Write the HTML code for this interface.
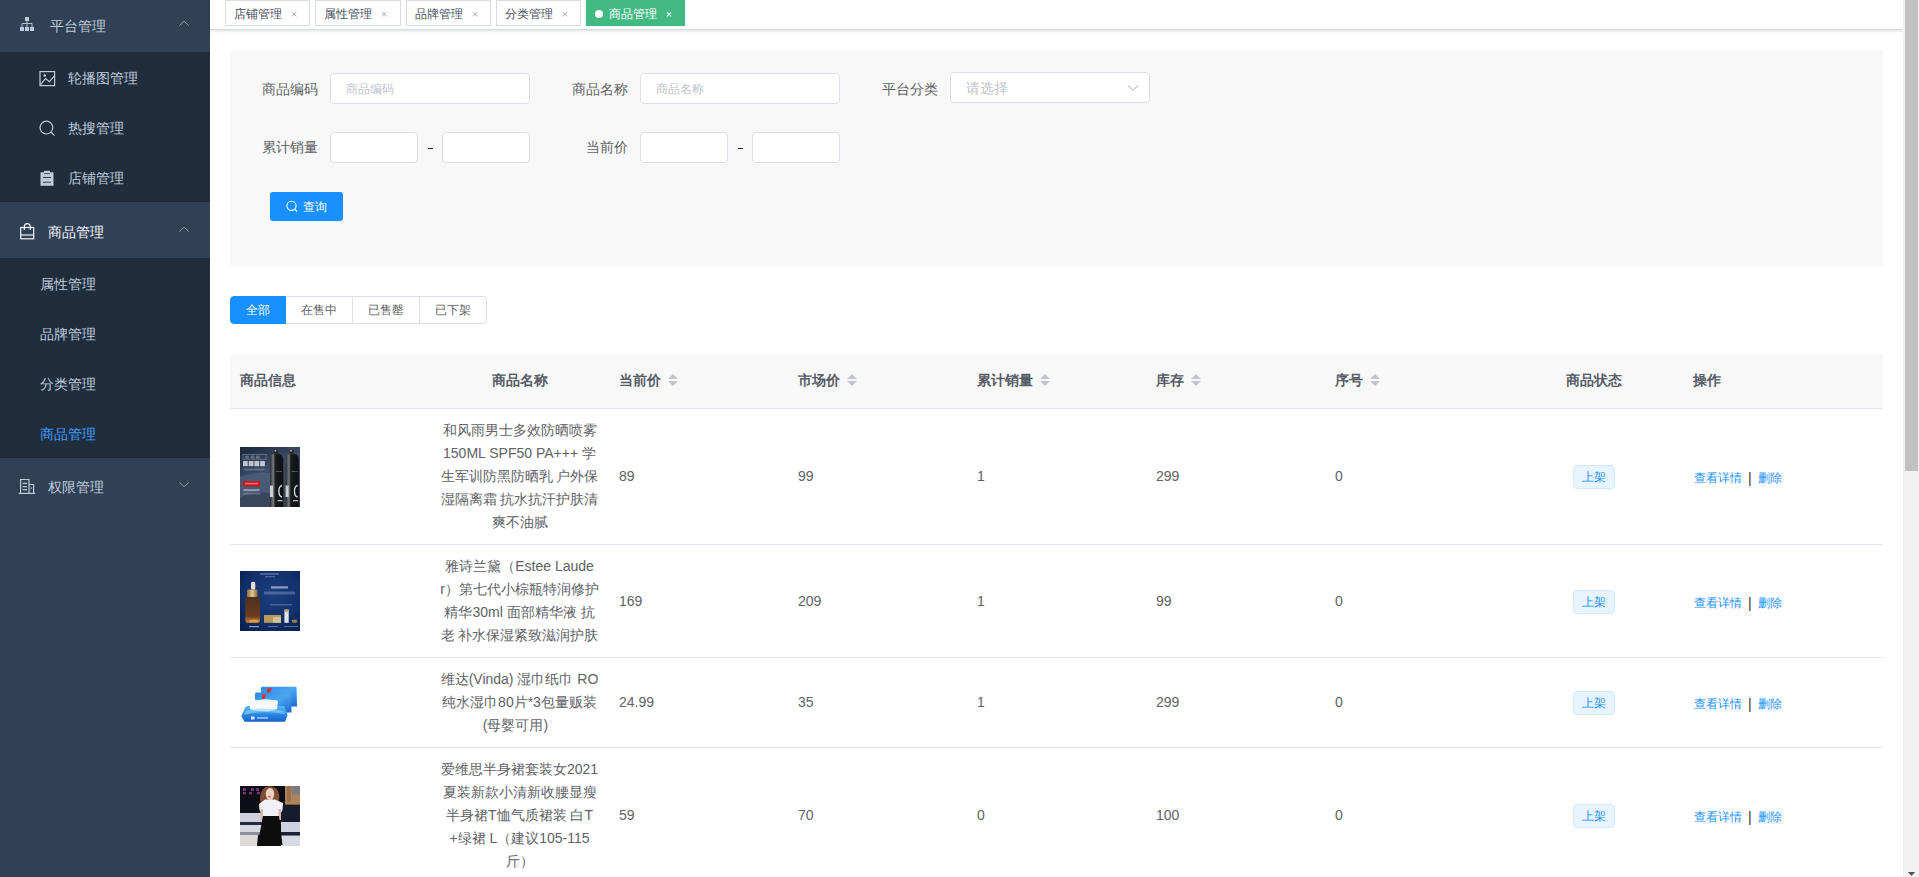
<!DOCTYPE html>
<html><head><meta charset="utf-8"><title>商品管理</title>
<style>
*{box-sizing:border-box;margin:0;padding:0}
html,body{width:1919px;height:877px;overflow:hidden;background:#fff;font-family:"Liberation Sans",sans-serif;}
.abs{position:absolute}
#side{position:absolute;left:0;top:0;width:210px;height:877px;background:#304156;color:#bfcbd9;font-size:14px}
.sub{position:absolute;left:0;width:210px;background:#1f2d3d}
.mi{position:absolute;left:0;width:210px;height:20px;line-height:20px;white-space:nowrap}
.ico{position:absolute}
#main{position:absolute;left:210px;top:0;width:1693px;height:877px;background:#fff}
#tags{position:absolute;left:0;top:0;width:1693px;height:30px;background:#fff;border-bottom:1px solid #d8dce5;box-shadow:0 1px 3px 0 rgba(0,0,0,.12),0 0 3px 0 rgba(0,0,0,.04)}
.tag{position:absolute;top:0;height:26px;line-height:24px;border:1px solid #d8dce5;color:#495060;background:#fff;font-size:12px;padding-left:8px;white-space:nowrap}
.tag .x{position:absolute;top:-1px}
.tag .tt{position:absolute;top:0;line-height:26px;height:26px}
.tag .dot{position:absolute;left:8px;top:9px;width:8px;height:8px;border-radius:50%;background:#fff}
.tag.act{background:#42b983;border-color:#42b983;color:#fff}
#sb{position:absolute;left:1903px;top:0;width:16px;height:877px;background:#f1f1f1}
#sb i{position:absolute;left:2px;top:0;width:13px;height:471px;background:#c1c1c1}

#card{position:absolute;left:20px;top:50px;width:1653px;height:216px;background:#f8f8f8}
.lbl{position:absolute;font-size:14px;color:#606266;line-height:20px;height:20px;white-space:nowrap;margin-top:1px}
.inp{position:absolute;background:#fff;border:1px solid #dcdfe6;border-radius:4px;height:31px}
.ph{position:absolute;left:15px;top:1px;line-height:29px;font-size:12px;color:#c0c4cc;white-space:nowrap}
.dash{position:absolute;width:5px;height:1px;background:#1a1a1a}
#qbtn{position:absolute;left:40px;top:142px;width:73px;height:29px;border-radius:3px;background:#1890ff;color:#fff;font-size:12px}
#radios{position:absolute;left:20px;top:296px;height:28px}
.rb{position:absolute;top:0;height:28px;border:1px solid #dcdfe6;background:#fff;color:#606266;font-size:12px;line-height:26px;text-align:center}
.rb.on{background:#1890ff;border-color:#1890ff;color:#fff}
#tbl{position:absolute;left:20px;top:354px;width:1653px;height:530px}
.th{position:absolute;left:0;top:0;width:1653px;height:55px;background:#f8f8f8;border-bottom:1px solid #dfe6ec}
.hc{position:absolute;top:-1px;height:54px;line-height:54px;font-size:14px;font-weight:bold;color:#575d68;white-space:nowrap}
.row{position:absolute;left:0;width:1653px;border-bottom:1px solid #dfe6ec}
.c{position:absolute;font-size:14px;color:#606266;line-height:23px;white-space:nowrap}
.nm{position:absolute;left:200px;width:179px;top:10px;text-align:center;font-size:14px;color:#606266;line-height:23px;white-space:nowrap}
.st{position:absolute;left:1343px;width:42px;height:24px;border:1px solid #d1e9ff;background:#e8f4ff;border-radius:4px;color:#1890ff;font-size:12px;line-height:22px;text-align:center}
.op{position:absolute;left:1464px;width:100px;height:20px;font-size:12px;color:#1890ff;line-height:20px;white-space:nowrap}
.op span,.op b{position:absolute;top:0}
.op b{font-weight:normal;color:#303133;font-size:14px}
.pic{position:absolute;left:10px;width:60px;height:60px;overflow:hidden}
.caret{position:absolute;top:20px;width:10px;height:12px}
</style></head><body>
<div id="side">
  <div class="sub" style="top:52px;height:150px"></div>
  <div class="sub" style="top:258px;height:200px"></div>
  <svg class="ico" style="left:0;top:0" width="210" height="520" viewBox="0 0 210 520">
    <g fill="#bfcbd9">
      <rect x="25" y="17" width="4" height="4"/>
      <rect x="20" y="27" width="4" height="4"/><rect x="25" y="27" width="4" height="4"/><rect x="30" y="27" width="4" height="4"/>
    </g>
    <g stroke="#bfcbd9" stroke-width="0.9" fill="none">
      <path d="M27 21V27M22 27V23.5H32V27"/>
    </g>
    <path d="M179.3 25.7L184.1 21.2L188.9 25.7" stroke="#909aa8" stroke-width="1" fill="none"/>
    <g stroke="#bfcbd9" stroke-width="1.2" fill="none">
      <rect x="40" y="71.6" width="14.6" height="14"/>
      <path d="M40.3 84.8L45.5 78.5L49.4 81.6L54.4 75.8"/>
      <circle cx="46.4" cy="127.6" r="6.4"/>
      <path d="M51 132.2L54.6 135.6"/>
    </g>
    <circle cx="44.7" cy="75.5" r="1.3" fill="#bfcbd9"/>
    <rect x="40.5" y="172.2" width="13" height="13.6" rx="0.6" fill="#bfcbd9"/>
    <rect x="44" y="170.8" width="6" height="2.6" fill="#bfcbd9"/>
    <path d="M44.2 173.6H49.8" stroke="#1f2d3d" stroke-width="0.8"/>
    <path d="M43 177.5H51M43 182.3H51" stroke="#1f2d3d" stroke-width="0.9"/>
    <g stroke="#f4f4f5" stroke-width="1.2" fill="none">
      <rect x="20.7" y="227.5" width="13" height="11.3"/>
      <path d="M20.7 235H33.7"/>
      <path d="M24.3 230V226.6A3 3 0 0 1 30.3 226.6V230"/>
    </g>
    <path d="M179.3 231.7L184.1 227.2L188.9 231.7" stroke="#909aa8" stroke-width="1" fill="none"/>
    <g stroke="#bfcbd9" stroke-width="1.2" fill="none">
      <path d="M20.6 493.3V479.5H29V493.3"/>
      <path d="M29 484.5H33.6V493.3"/>
      <path d="M18.6 493.4H35.2"/>
      <path d="M22.6 483.4H27M22.6 486.6H27M22.6 489.6H27M30.6 488.2H32"/>
    </g>
    <path d="M179.3 482.2L184.1 486.6L188.9 482.2" stroke="#909aa8" stroke-width="1" fill="none"/>
  </svg>
  <div class="mi" style="left:50px;top:16px">平台管理</div>
  <div class="mi" style="left:68px;top:68px">轮播图管理</div>
  <div class="mi" style="left:68px;top:118px">热搜管理</div>
  <div class="mi" style="left:68px;top:168px">店铺管理</div>
  <div class="mi" style="left:48px;top:222px;color:#f4f4f5">商品管理</div>
  <div class="mi" style="left:40px;top:274px">属性管理</div>
  <div class="mi" style="left:40px;top:324px">品牌管理</div>
  <div class="mi" style="left:40px;top:374px">分类管理</div>
  <div class="mi" style="left:40px;top:424px;color:#409eff">商品管理</div>
  <div class="mi" style="left:48px;top:477px">权限管理</div>
</div>
<div id="main">
  <div id="card">
    <div class="lbl" style="left:32px;top:28px">商品编码</div>
    <div class="inp" style="left:100px;top:23px;width:200px"><span class="ph">商品编码</span></div>
    <div class="lbl" style="left:342px;top:28px">商品名称</div>
    <div class="inp" style="left:410px;top:23px;width:200px"><span class="ph">商品名称</span></div>
    <div class="lbl" style="left:652px;top:28px">平台分类</div>
    <div class="inp" style="left:720px;top:22px;width:200px"><span class="ph" style="font-size:14px">请选择</span>
      <svg style="position:absolute;left:176px;top:11px" width="12" height="8"><path d="M1 1.5L6 6.3L11 1.5" stroke="#c0c4cc" stroke-width="1.1" fill="none"/></svg></div>
    <div class="lbl" style="left:32px;top:86px">累计销量</div>
    <div class="inp" style="left:100px;top:82px;width:88px"></div>
    <div class="dash" style="left:198px;top:98px"></div>
    <div class="inp" style="left:212px;top:82px;width:88px"></div>
    <div class="lbl" style="left:356px;top:86px">当前价</div>
    <div class="inp" style="left:410px;top:82px;width:88px"></div>
    <div class="dash" style="left:508px;top:98px"></div>
    <div class="inp" style="left:522px;top:82px;width:88px"></div>
    <div id="qbtn">
      <svg style="position:absolute;left:14px;top:7px" width="14" height="14"><circle cx="7.5" cy="6.8" r="4.6" stroke="#fff" stroke-width="1.1" fill="none"/><path d="M10.8 10.2L13 12.5" stroke="#fff" stroke-width="1.1"/></svg>
      <span style="position:absolute;left:33px;top:1px;line-height:29px">查询</span>
    </div>
  </div>
  <div id="radios">
    <div class="rb on" style="left:0;width:56px;border-radius:4px 0 0 4px">全部</div>
    <div class="rb" style="left:56px;width:67px;border-left:0">在售中</div>
    <div class="rb" style="left:122px;width:68px">已售罄</div>
    <div class="rb" style="left:190px;width:67px;border-left:0;border-radius:0 4px 4px 0">已下架</div>
  </div>
  <div id="tbl">
    <div class="th">
      <div class="hc" style="left:10px">商品信息</div>
      <div class="hc" style="left:200px;width:179px;text-align:center">商品名称</div>
      <div class="hc" style="left:389px">当前价</div><svg class="caret" style="left:438px" width="10" height="12" viewBox="0 0 10 12"><path d="M0 5L5 0L10 5Z M0 7L5 12L10 7Z" fill="#c0c4cc"/></svg>
<div class="hc" style="left:568px">市场价</div><svg class="caret" style="left:617px" width="10" height="12" viewBox="0 0 10 12"><path d="M0 5L5 0L10 5Z M0 7L5 12L10 7Z" fill="#c0c4cc"/></svg>
<div class="hc" style="left:747px">累计销量</div><svg class="caret" style="left:810px" width="10" height="12" viewBox="0 0 10 12"><path d="M0 5L5 0L10 5Z M0 7L5 12L10 7Z" fill="#c0c4cc"/></svg>
<div class="hc" style="left:926px">库存</div><svg class="caret" style="left:961px" width="10" height="12" viewBox="0 0 10 12"><path d="M0 5L5 0L10 5Z M0 7L5 12L10 7Z" fill="#c0c4cc"/></svg>
<div class="hc" style="left:1105px">序号</div><svg class="caret" style="left:1140px" width="10" height="12" viewBox="0 0 10 12"><path d="M0 5L5 0L10 5Z M0 7L5 12L10 7Z" fill="#c0c4cc"/></svg>

      <div class="hc" style="left:1274px;width:179px;text-align:center">商品状态</div>
      <div class="hc" style="left:1463px">操作</div>
    </div>
    <!--ROWS--><div class="row" style="top:55px;height:136px">
<div class="pic" style="top:38px"><svg width="60" height="60" viewBox="0 0 60 60"><defs><linearGradient id="g1" x1="0" y1="0" x2="0.5" y2="1"><stop offset="0" stop-color="#1a263a"/><stop offset="0.5" stop-color="#3d4f6a"/><stop offset="1" stop-color="#34445c"/></linearGradient>
<linearGradient id="g1b" x1="0" y1="0" x2="1" y2="0"><stop offset="0" stop-color="#2a2c30"/><stop offset="0.25" stop-color="#77797c"/><stop offset="0.4" stop-color="#1a1b1d"/><stop offset="1" stop-color="#0e0f10"/></linearGradient></defs>
<rect width="60" height="60" fill="url(#g1)"/>
<path d="M0 30Q15 24 30 26V60H0Z" fill="#56677f" opacity="0.55"/>
<path d="M0 50Q15 44 30 46V60H0Z" fill="#2e3b50" opacity="0.6"/>
<rect x="3" y="7.6" width="23" height="4.6" fill="none" stroke="#8a96a8" stroke-width="0.7" opacity="0.8"/>
<g fill="#8a96a8" opacity="0.55"><rect x="5" y="8.6" width="4" height="3"/><rect x="10.5" y="8.6" width="4" height="3"/><rect x="16" y="8.6" width="4" height="3"/></g>
<g fill="#d8dde4" opacity="0.85"><rect x="3" y="14" width="4.8" height="5.2"/><rect x="8.7" y="14" width="4.8" height="5.2"/><rect x="14.4" y="14" width="4.8" height="5.2"/><rect x="20.1" y="14" width="4.8" height="5.2"/></g>
<rect x="3.5" y="21.5" width="21" height="2" fill="#6d7a8e" opacity="0.7"/>
<rect x="3" y="34" width="17" height="5.4" fill="#c4161c"/>
<rect x="5" y="35.8" width="13" height="1.6" fill="#f2b0b0" opacity="0.6"/>
<rect x="3.5" y="42" width="16" height="2.2" fill="#a9b3c2" opacity="0.7"/>
<rect x="3.5" y="46" width="17" height="1.5" fill="#7f8c9e" opacity="0.6"/>
<path d="M30 60V13Q30 7.6 34 7H39Q43 7.6 43.3 13V60Z" fill="url(#g1b)"/>
<path d="M45.6 60V13Q45.6 7.6 49.6 7H54.6Q58.8 7.6 58.8 13V60Z" fill="url(#g1b)"/>
<rect x="34" y="3" width="4" height="4.5" fill="#2a2a2c"/><rect x="49.6" y="3" width="4" height="4.5" fill="#2a2a2c"/>
<rect x="34.6" y="3" width="1.6" height="1.5" fill="#c8b070"/><rect x="50.2" y="3" width="1.6" height="1.5" fill="#c8b070"/>
<path d="M42 38.5A3.6 5.8 0 0 0 42 50" stroke="#d9d9d9" stroke-width="1.3" fill="none"/><path d="M57.6 38.5A3.6 5.8 0 0 0 57.6 50" stroke="#d9d9d9" stroke-width="1.3" fill="none"/>
<rect x="30" y="38.6" width="3" height="11.4" fill="#d0d0d0"/><rect x="45.6" y="38.6" width="3" height="11.4" fill="#d0d0d0"/>
<rect x="37.5" y="53" width="5" height="1.3" fill="#bdbdbd"/><rect x="53" y="53" width="5" height="1.3" fill="#bdbdbd"/>
<rect x="36" y="24" width="6" height="0.8" fill="#666"/><rect x="51.6" y="24" width="6" height="0.8" fill="#666"/>
</svg></div>
<div class="nm">和风雨男士多效防晒喷雾<br>150ML SPF50 PA+++ 学<br>生军训防黑防晒乳 户外保<br>湿隔离霜 抗水抗汗护肤清<br>爽不油腻</div>
<div class="c" style="left:389px;top:56px">89</div><div class="c" style="left:568px;top:56px">99</div><div class="c" style="left:747px;top:56px">1</div><div class="c" style="left:926px;top:56px">299</div><div class="c" style="left:1105px;top:56px">0</div>
<div class="st" style="top:56px">上架</div>
<div class="op" style="top:59px"><span style="left:0">查看详情</span><b style="left:54px">|</b><span style="left:64px">删除</span></div>
</div>
<div class="row" style="top:191px;height:113px">
<div class="pic" style="top:26px"><svg width="60" height="60" viewBox="0 0 60 60"><defs><radialGradient id="g2" cx="0.55" cy="0.4" r="0.75"><stop offset="0" stop-color="#1c3f7e"/><stop offset="0.6" stop-color="#12306a"/><stop offset="1" stop-color="#0a1f4e"/></radialGradient>
<linearGradient id="g2b" x1="0" y1="0" x2="0" y2="1"><stop offset="0" stop-color="#4e3024"/><stop offset="0.75" stop-color="#6a3c1e"/><stop offset="1" stop-color="#d08a3a"/></linearGradient>
<linearGradient id="g2c" x1="0" y1="0" x2="1" y2="0"><stop offset="0" stop-color="#8a6a3a"/><stop offset="0.5" stop-color="#e0c890"/><stop offset="1" stop-color="#8a6a3a"/></linearGradient></defs>
<rect width="60" height="60" fill="url(#g2)"/>
<rect x="5.3" y="25.4" width="14.7" height="26.4" rx="2.5" fill="url(#g2b)"/>
<rect x="7" y="18.4" width="10.5" height="7.6" rx="1" fill="url(#g2c)"/>
<rect x="11" y="10.7" width="4.3" height="7.7" rx="1.5" fill="#e6e2d8"/>
<ellipse cx="14" cy="50" rx="5" ry="1.6" fill="#f0a040" opacity="0.8"/>
<rect x="20" y="2.2" width="19" height="1.5" fill="#8a9cc4" opacity="0.6"/>
<rect x="25" y="5" width="10" height="1.3" fill="#8a9cc4" opacity="0.5"/>
<rect x="31" y="15.3" width="17" height="2.2" fill="#d8dff0" opacity="0.6"/>
<rect x="24" y="20.5" width="31" height="3" fill="#aab8d8" opacity="0.35"/>
<rect x="30" y="33" width="22" height="1.5" fill="#90a2cc" opacity="0.4"/>
<rect x="24" y="44" width="17" height="7.8" fill="#b89a5c"/>
<rect x="33" y="46" width="8" height="5.8" fill="#d2c094"/>
<rect x="44.4" y="38.6" width="4.3" height="13.2" fill="#e2e4ea"/>
<rect x="44.9" y="38.6" width="3.3" height="2.5" fill="#c8a860"/>
<rect x="52" y="48.7" width="5" height="3.1" rx="1" fill="#a8803a"/>
<rect x="9" y="55" width="10" height="1.2" fill="#cfd6e8" opacity="0.7"/>
<rect x="28" y="55" width="10" height="1" fill="#8a9cc4" opacity="0.6"/>
<rect x="44" y="55" width="14" height="1" fill="#8a9cc4" opacity="0.6"/>
</svg></div>
<div class="nm">雅诗兰黛（Estee Laude<br>r）第七代小棕瓶特润修护<br>精华30ml 面部精华液 抗<br>老 补水保湿紧致滋润护肤</div>
<div class="c" style="left:389px;top:45px">169</div><div class="c" style="left:568px;top:45px">209</div><div class="c" style="left:747px;top:45px">1</div><div class="c" style="left:926px;top:45px">99</div><div class="c" style="left:1105px;top:45px">0</div>
<div class="st" style="top:45px">上架</div>
<div class="op" style="top:48px"><span style="left:0">查看详情</span><b style="left:54px">|</b><span style="left:64px">删除</span></div>
</div>
<div class="row" style="top:304px;height:90px">
<div class="pic" style="top:15px"><svg width="60" height="60" viewBox="0 0 60 60"><defs><linearGradient id="g3" x1="0" y1="0" x2="1" y2="1"><stop offset="0" stop-color="#2b8ae8"/><stop offset="0.5" stop-color="#4aa6f0"/><stop offset="1" stop-color="#1c68d0"/></linearGradient>
<linearGradient id="g3b" x1="0" y1="0" x2="0" y2="1"><stop offset="0" stop-color="#5cc0f4"/><stop offset="0.45" stop-color="#2f8ee8"/><stop offset="1" stop-color="#1a62cc"/></linearGradient>
<filter id="b3" x="-5%" y="-5%" width="110%" height="110%"><feGaussianBlur stdDeviation="0.45"/></filter></defs>
<rect width="60" height="60" fill="#fff"/>
<g filter="url(#b3)">
<path d="M21 15Q21 13.7 22.5 13.7H55.5Q57 13.7 56.6 15.5L57 33.5H48L21 30Z" fill="url(#g3)"/>
<path d="M15 21Q15 19.5 16.5 19.5H50Q51.5 19.5 51.3 21L51.5 39.5H44L15 36Z" fill="url(#g3)"/>
<path d="M27 15.4L32 15L30 19.5L27 19.8Z" fill="#d83038"/>
<path d="M22 21.5L26 21.2L24.5 26L22 26.2Z" fill="#d83038"/>
<path d="M1.4 43L5.5 34Q8 32 12 33H44Q46.5 37 47.5 42.5L45 48.8H4.5Z" fill="url(#g3b)"/>
<path d="M9 29Q13 26 19 27Q26 25.5 32 27Q36 26.5 38 28L37 36Q30 39.5 22 38Q14 38.5 10 36Z" fill="#f6f8fb"/>
<path d="M5 38Q20 33 44 38L45 41Q22 37 4 42Z" fill="#8fd6f6" opacity="0.6"/>
<rect x="11" y="43.5" width="3.5" height="3" fill="#ffffff" opacity="0.85"/>
<rect x="17" y="44.2" width="11" height="1.6" fill="#cfe6ff" opacity="0.7"/>
</g>
</svg></div>
<div class="nm">维达(Vinda) 湿巾纸巾 RO<br>纯水湿巾80片*3包量贩装<br><span style="position:relative;left:-4px">(母婴可用)</span></div>
<div class="c" style="left:389px;top:33px">24.99</div><div class="c" style="left:568px;top:33px">35</div><div class="c" style="left:747px;top:33px">1</div><div class="c" style="left:926px;top:33px">299</div><div class="c" style="left:1105px;top:33px">0</div>
<div class="st" style="top:33px">上架</div>
<div class="op" style="top:36px"><span style="left:0">查看详情</span><b style="left:54px">|</b><span style="left:64px">删除</span></div>
</div>
<div class="row" style="top:394px;height:136px">
<div class="pic" style="top:38px"><svg width="60" height="60" viewBox="0 0 60 60"><defs><filter id="b4" x="-5%" y="-5%" width="110%" height="110%"><feGaussianBlur stdDeviation="0.5"/></filter></defs>
<rect width="60" height="60" fill="#0b0b14"/>
<g filter="url(#b4)">
<rect x="0" y="0" width="60" height="60" fill="#0b0b14"/>
<rect x="45" y="0" width="15" height="18.8" fill="#b0845a"/>
<rect x="47" y="0" width="4" height="16" fill="#9a7048"/>
<rect x="52" y="0" width="8" height="8.5" fill="#7a7a80"/>
<rect x="41" y="18.8" width="19" height="18" fill="#161a2e"/>
<rect x="0" y="27" width="22" height="9" fill="#cdd0dc"/>
<rect x="0" y="36" width="22" height="3" fill="#262a3e"/>
<rect x="0" y="39" width="22" height="7" fill="#d6d8e2"/>
<rect x="0" y="46" width="22" height="3" fill="#8c90a2"/>
<path d="M0 49H18L17 60H0Z" fill="#dedad8"/>
<rect x="41" y="36" width="19" height="10" fill="#cfd2de"/>
<rect x="41" y="46" width="19" height="3.5" fill="#1e2236"/>
<rect x="41" y="49.5" width="19" height="10.5" fill="#d8dae2"/>
<path d="M29 0.3Q21 0.5 20 12Q20 17 22 19H37Q40 15 39 8Q37.5 0.5 29 0.3Z" fill="#7e4e32"/>
<ellipse cx="30" cy="8" rx="4.3" ry="6" fill="#ecd0c0"/>
<ellipse cx="29.5" cy="10.8" rx="1.4" ry="0.7" fill="#e03a4a"/>
<path d="M19 18L25 13.5H35L43 17L42.5 24L39.5 30H23L19.5 24Z" fill="#f0f0f6"/>
<rect x="20.5" y="23" width="2.5" height="11" fill="#d9b9a6"/><rect x="38.5" y="23" width="2.5" height="11" fill="#d9b9a6"/>
<path d="M23 30H39L42.5 59H17.5Z" fill="#0a0b0a"/>
<rect x="3" y="2" width="3" height="3" fill="#8a3a8a" opacity="0.8"/><rect x="11" y="2" width="3" height="3" fill="#8a3a8a" opacity="0.8"/><rect x="16" y="2" width="3" height="3" fill="#8a3a8a" opacity="0.8"/>
<rect x="3" y="6" width="3" height="2.5" fill="#8a3a8a" opacity="0.8"/><rect x="9" y="6" width="3" height="2.5" fill="#8a3a8a" opacity="0.8"/><rect x="17" y="6" width="3" height="2.5" fill="#8a3a8a" opacity="0.8"/>
</g>
</svg></div>
<div class="nm">爱维思半身裙套装女2021<br>夏装新款小清新收腰显瘦<br>半身裙T恤气质裙装 白T<br>+绿裙 L（建议105-115<br>斤）</div>
<div class="c" style="left:389px;top:56px">59</div><div class="c" style="left:568px;top:56px">70</div><div class="c" style="left:747px;top:56px">0</div><div class="c" style="left:926px;top:56px">100</div><div class="c" style="left:1105px;top:56px">0</div>
<div class="st" style="top:56px">上架</div>
<div class="op" style="top:59px"><span style="left:0">查看详情</span><b style="left:54px">|</b><span style="left:64px">删除</span></div>
</div>
<!--/ROWS-->
  </div>
  <div id="tags">
<div class="tag" style="left:15px;width:85px"><span class="tt" style="left:8px">店铺管理</span><svg class="x" style="left:64px" width="9" height="26"><path d="M2 12.2L6.2 16.4M6.2 12.2L2 16.4" stroke="#959baa" stroke-width="0.9"/></svg></div>
<div class="tag" style="left:105px;width:86px"><span class="tt" style="left:8px">属性管理</span><svg class="x" style="left:64px" width="9" height="26"><path d="M2 12.2L6.2 16.4M6.2 12.2L2 16.4" stroke="#959baa" stroke-width="0.9"/></svg></div>
<div class="tag" style="left:196px;width:85px"><span class="tt" style="left:8px">品牌管理</span><svg class="x" style="left:64px" width="9" height="26"><path d="M2 12.2L6.2 16.4M6.2 12.2L2 16.4" stroke="#959baa" stroke-width="0.9"/></svg></div>
<div class="tag" style="left:286px;width:85px"><span class="tt" style="left:8px">分类管理</span><svg class="x" style="left:64px" width="9" height="26"><path d="M2 12.2L6.2 16.4M6.2 12.2L2 16.4" stroke="#959baa" stroke-width="0.9"/></svg></div>
<div class="tag act" style="left:376px;width:99px"><i class="dot"></i><span class="tt" style="left:22px">商品管理</span><svg class="x" style="left:78px" width="9" height="26"><path d="M2 12.2L6.2 16.4M6.2 12.2L2 16.4" stroke="#fff" stroke-width="1.1"/></svg></div>
  </div>
</div>
<div id="sb"><i></i><svg style="position:absolute;left:4px;top:871px" width="9" height="6"><path d="M0.9 0.9H8.1L4.5 5Z" fill="#505050"/></svg></div>
</body></html>
